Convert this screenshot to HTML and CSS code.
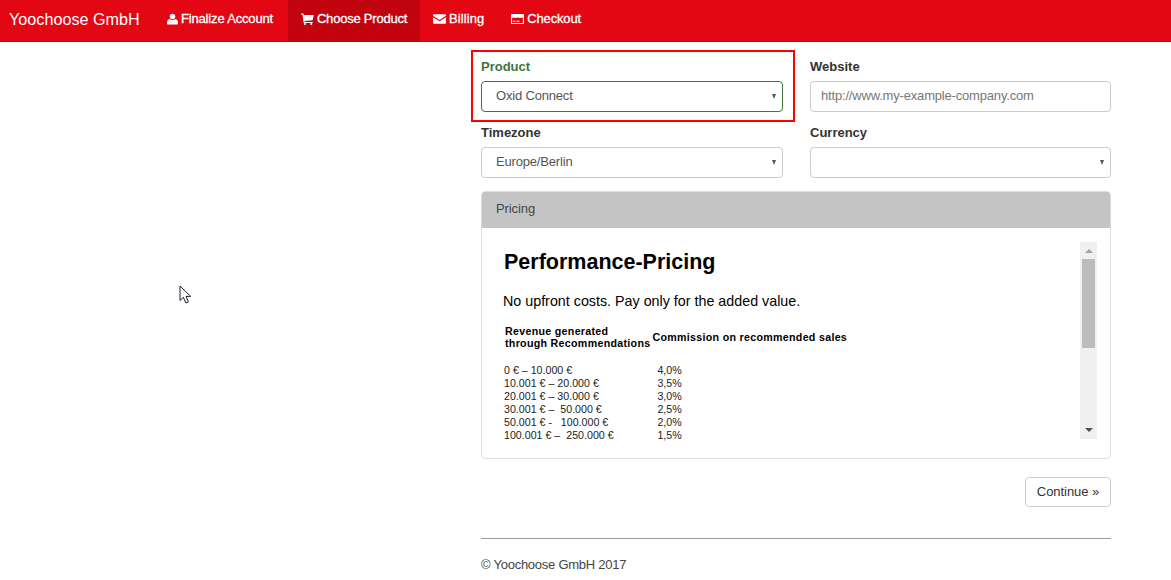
FILE: index.html
```html
<!DOCTYPE html>
<html>
<head>
    <title>Choose Product</title>
    <meta name="viewport" content="width=device-width, initial-scale=1.0">
    <link rel="stylesheet" href="styles.css">
</head>

<body>
    <nav class="navbar">
        <a class="brand" href="#">Yoochoose GmbH</a>
        <a class="nav-item nav-first" href="#">
            <svg class="nav-icon icon-user" viewBox="0 0 12 12"><circle cx="6" cy="3.2" r="3"/><path d="M0.8 12c-.5 0-.8-.4-.8-.9 0-2.600.5-5 2.800-5.200.8.700 1.900 1.100 3.200 1.100s2.400-.4 3.200-1.100c2.300.2 2.800 2.600 2.800 5.200 0 .5-.3.900-.8.900z"/></svg>
            Finalize Account
        </a>
        <a class="nav-item active" href="#">
            <svg class="nav-icon" viewBox="0 0 13 12"><path d="M0 .6h2.400l.4 1.400h10l-1.200 5.200-8.100.8.300 1h7.900v1H2.700L1.500 1.600H0z"/><circle cx="4" cy="11" r="1"/><circle cx="10.300" cy="11" r="1"/></svg>
            Choose Product
        </a>
        <a class="nav-item nav-billing" href="#">
            <svg class="nav-icon" viewBox="0 0 14 12"><path d="M1 1h12c.6 0 1 .4 1 1v.5L7 7 0 2.500V2c0-.6.4-1 1-1z"/><path d="M0 4l7 4.500L14 4v6c0 .6-.4 1-1 1H1c-.6 0-1-.4-1-1z"/></svg>
            Billing
        </a>
        <a class="nav-item" href="#">
            <svg class="nav-icon" viewBox="0 0 14 12"><path fill-rule="evenodd" d="M1 .5h12c.6 0 1 .4 1 1v9c0 .6-.4 1-1 1H1c-.6 0-1-.4-1-1v-9c0-.6.4-1 1-1zM1.200 4.600v5.700h11.600V4.600zM2.200 8h2.600v1H2.200zm3.500 0h3.500v1H5.700z"/></svg>
            Checkout
        </a>
    </nav>

    <main class="content">
        <form class="form-grid">
            <div class="field has-success">
                <div class="highlight"></div>
                <label for="product">Product</label>
                <div class="select-wrap">
                    <select id="product" class="control"><option>Oxid Connect</option></select>
                </div>
            </div>
            <div class="field">
                <label for="website">Website</label>
                <input id="website" class="control text-control" type="text" placeholder="http://www.my-example-company.com">
            </div>
            <div class="field">
                <label for="timezone">Timezone</label>
                <div class="select-wrap">
                    <select id="timezone" class="control"><option>Europe/Berlin</option></select>
                </div>
            </div>
            <div class="field">
                <label for="currency">Currency</label>
                <div class="select-wrap">
                    <select id="currency" class="control"><option></option></select>
                </div>
            </div>
        </form>

        <section class="panel">
            <div class="panel-heading">Pricing</div>
            <div class="panel-body">
                <div class="pricing">
                    <h1>Performance-Pricing</h1>
                    <p>No upfront costs. Pay only for the added value.</p>
                    <table class="rates">
                        <thead>
                            <tr>
                                <th>Revenue generated<br>through Recommendations</th>
                                <th>Commission on recommended sales</th>
                            </tr>
                        </thead>
                        <tbody>
                            <tr><td>0 € – 10.000 €</td><td class="rate">4,0%</td></tr>
                            <tr><td>10.001 € – 20.000 €</td><td class="rate">3,5%</td></tr>
                            <tr><td>20.001 € – 30.000 €</td><td class="rate">3,0%</td></tr>
                            <tr><td>30.001 € –&nbsp; 50.000 €</td><td class="rate">2,5%</td></tr>
                            <tr><td>50.001 € -&nbsp;&nbsp; 100.000 €</td><td class="rate">2,0%</td></tr>
                            <tr><td>100.001 € –&nbsp; 250.000 €</td><td class="rate">1,5%</td></tr>
                        </tbody>
                    </table>
                </div>
                <div class="scrollbar">
                    <span class="arrow-up"></span>
                    <div class="scroll-track"><div class="scroll-thumb"></div></div>
                    <span class="arrow-down"></span>
                </div>
            </div>
        </section>

        <div class="actions">
            <button class="btn" type="button">Continue »</button>
        </div>

        <hr class="rule">
        <footer class="footer">© Yoochoose GmbH 2017</footer>
    </main>

    <svg class="cursor" viewBox="0 0 13 20"><path d="M1 1v14.500l3.400-3.200 2.400 5.700 2.600-1.100-2.400-5.500h4.700z" fill="#fff" stroke="#1a1f33" stroke-width="1"/></svg>
</body>
</html>
```

FILE: styles.css
```css
* {
    box-sizing: border-box;
}

html, body {
    height: 580px;
    overflow: hidden;
}

body {
    margin: 0;
    font-family: "Liberation Sans", Arial, sans-serif;
    font-size: 14px;
    line-height: 20px;
    color: #333;
    background: #fff;
}

.navbar {
    display: flex;
    height: 42px;
    background: #e30613;
    border-bottom: 1px solid #d20511;
}

.navbar a {
    color: #fff;
    text-decoration: none;
}

.brand {
    width: 154px;
    padding: 9px 0 0 9px;
    font-size: 16.200px;
}

.nav-item {
    display: flex;
    align-items: center;
    gap: 3px;
    height: 41px;
    padding: 0 13px 4px;
    font-size: 13px;
    letter-spacing: -0.170px;
    white-space: nowrap;
    -webkit-text-stroke: 0.300px #fff;
}

.nav-first {
    padding-right: 15px;
}

.nav-billing {
    padding-right: 14px;
    letter-spacing: 0.100px;
}

.nav-item.active {
    width: 132px;
    letter-spacing: -0.220px;
    background: #c2040e;
}

.nav-icon {
    width: 13px;
    height: 12px;
    fill: #fff;
    flex: none;
    stroke: none;
}

.icon-user {
    width: 11px;
}

.content {
    width: 630px;
    margin-left: 481px;
}

.form-grid {
    display: grid;
    grid-template-columns: 302px 301px;
    column-gap: 27px;
    row-gap: 11px;
    padding-top: 15px;
}

.field {
    position: relative;
}

.field label {
    display: block;
    margin-bottom: 5px;
    font-weight: bold;
    font-size: 13px;
    line-height: 19px;
}

.has-success label {
    color: #3c763d;
}

.has-success .control {
    border-color: #3c763d;
}

.highlight {
    position: absolute;
    top: -7px;
    left: -10px;
    width: 324px;
    height: 72px;
    border: 2px solid #f00;
    pointer-events: none;
}

.control {
    display: block;
    width: 100%;
    height: 31px;
    padding: 0 14px 2px;
    font-family: inherit;
    font-size: 13px;
    letter-spacing: -0.180px;
    color: #555;
    background: #fff;
    border: 1px solid #ccc;
    border-radius: 4px;
    appearance: none;
}

.text-control {
    padding: 0 10px 2px;
}

.text-control::placeholder {
    color: #777;
    opacity: 1;
}

.select-wrap {
    position: relative;
}

.select-wrap::after {
    content: "";
    position: absolute;
    top: 13px;
    right: 7px;
    border-left: 2.500px solid transparent;
    border-right: 2.500px solid transparent;
    border-top: 5px solid #555;
}

.panel {
    height: 268px;
    margin-top: 13px;
    background: #fff;
    border: 1px solid #ddd;
    border-radius: 4px;
}

.panel-heading {
    height: 36px;
    padding: 7px 14px;
    font-size: 13px;
    letter-spacing: -0.100px;
    color: #444;
    background: #c4c4c4;
    border-radius: 3px 3px 0 0;
}

.panel-body {
    display: flex;
    justify-content: space-between;
    height: 197px;
    margin-top: 14px;
    padding: 0 13px 0 21px;
}

.pricing {
    flex: 1;
    color: #000;
}

.pricing h1 {
    margin: 5px 0 0 1px;
    font-size: 21.500px;
    line-height: 31px;
    font-weight: bold;
}

.pricing p {
    margin: 13px 0 0;
    font-size: 14.300px;
    line-height: 20px;
}

.rates {
    margin-top: 10px;
    border-collapse: collapse;
    font-size: 10.670px;
    line-height: 12px;
    color: #222;
}

.rates th {
    padding: 0 0 0 2px;
    text-align: left;
    font-weight: bold;
    color: #000;
    letter-spacing: 0.300px;
}

.rates thead tr {
    height: 32px;
}

.rates td {
    height: 13px;
    padding: 0 0 0 1px;
    line-height: 13px;
}

.rates thead::after {
    content: "";
    display: table-row;
    height: 11px;
}

.rates td.rate {
    padding-left: 7px;
}

.scrollbar {
    display: flex;
    flex-direction: column;
    align-items: center;
    width: 17px;
    background: #f0f0f0;
    flex: none;
}

.arrow-up, .arrow-down {
    flex: none;
    width: 0;
    height: 0;
    border-left: 4px solid transparent;
    border-right: 4px solid transparent;
}

.arrow-up {
    margin: 7px 0 6px;
    border-bottom: 4px solid #a3a3a3;
}

.arrow-down {
    margin: 4px 0 7px;
    border-top: 4px solid #505050;
}

.scroll-track {
    flex: 1;
    width: 13px;
}

.scroll-thumb {
    height: 89px;
    background: #bcbcbc;
}

.actions {
    display: flex;
    justify-content: flex-end;
    margin-top: 18px;
}

.btn {
    width: 86px;
    height: 30px;
    padding: 0 0 2px;
    font-family: inherit;
    font-size: 13px;
    letter-spacing: -0.050px;
    color: #333;
    background: #fff;
    border: 1px solid #ccc;
    border-radius: 4px;
}

.rule {
    height: 1px;
    margin: 31px 0 0;
    border: 0;
    background: #999;
}

.footer {
    margin-top: 16px;
    font-size: 13px;
    letter-spacing: -0.250px;
    color: #444;
}

.cursor {
    position: absolute;
    top: 285px;
    left: 179px;
    width: 13px;
    height: 20px;
}
```
